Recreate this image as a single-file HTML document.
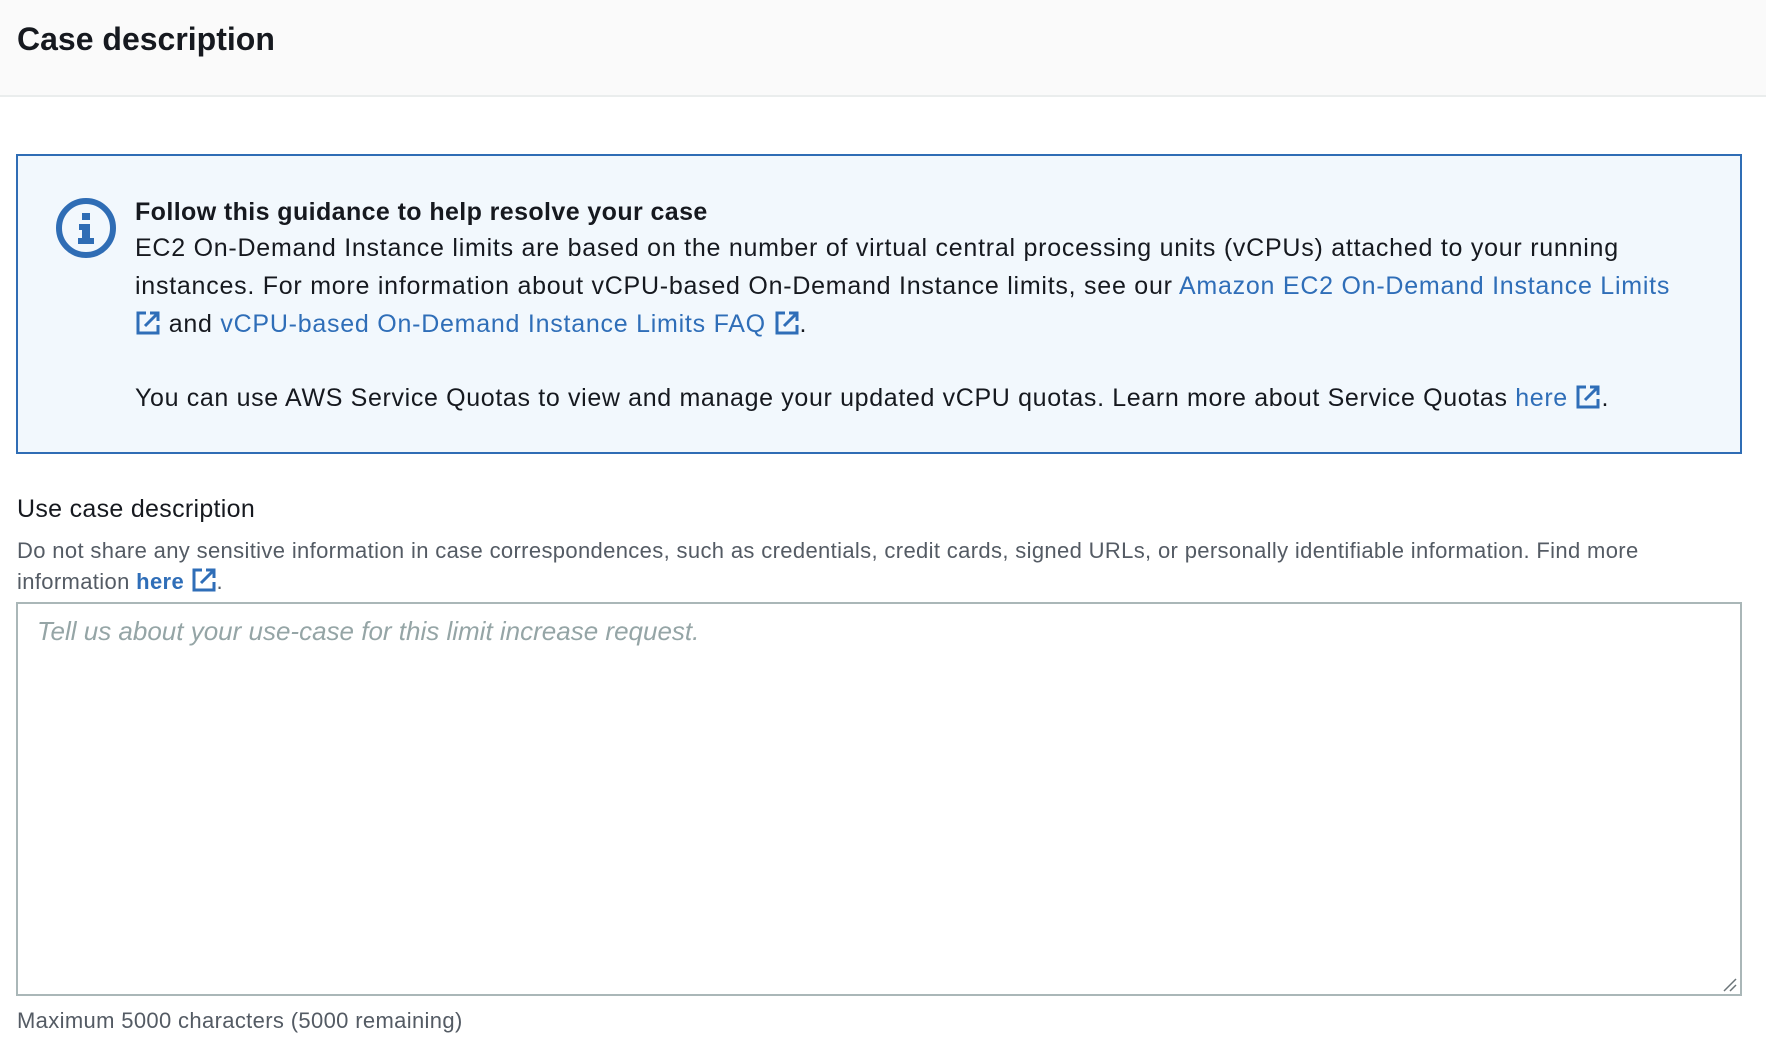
<!DOCTYPE html>
<html><head><meta charset="utf-8">
<style>
*{margin:0;padding:0;box-sizing:border-box}
body{width:1766px;height:1052px;background:#fff;font-family:"Liberation Sans",sans-serif;color:#16191f;position:relative;overflow:hidden}
.hdr{position:absolute;left:0;top:0;width:1766px;height:97px;background:#fafafa;border-bottom:2px solid #eaeded}
.hdr h1{position:absolute;left:17px;top:21px;font-size:32px;font-weight:700;letter-spacing:0px}
.box{position:absolute;left:16px;top:154px;width:1726px;height:300px;background:#f2f8fd;border:2px solid #2f6db5}
.ic{position:absolute;left:55px;top:197px}
.t{position:absolute;left:135px;font-size:25px;letter-spacing:0.75px;white-space:nowrap;line-height:30px}
a{color:#2f6eb8;text-decoration:none}
.ex{display:inline-block;vertical-align:-4px;width:26px;height:26px}
.lbl{position:absolute;left:17px;top:495px;font-size:25px;letter-spacing:0.3px}
.hint{position:absolute;left:17px;font-size:22px;letter-spacing:0.35px;color:#545b64;white-space:nowrap}
.ta{position:absolute;left:16px;top:602px;width:1726px;height:394px;border:2px solid #aab7b8;background:#fff}
.ph{position:absolute;left:37px;top:616px;font-size:26px;font-style:italic;color:#95a5a6}
</style></head><body>
<div class="hdr"><h1>Case description</h1></div>
<div class="box"></div>
<svg class="ic" width="62" height="62" viewBox="0 0 62 62"><circle cx="31" cy="31" r="27" fill="none" stroke="#2f6db5" stroke-width="6"/><rect x="27" y="16" width="8" height="7" fill="#2f6db5"/><path d="M24 27h11v14h4v6H23v-6h4v-8h-3z" fill="#2f6db5"/></svg>
<div class="t" style="top:197px;font-weight:700;letter-spacing:0.4px">Follow this guidance to help resolve your case</div>
<div class="t" style="top:233px">EC2 On-Demand Instance limits are based on the number of virtual central processing units (vCPUs) attached to your running</div>
<div class="t" style="top:271px">instances. For more information about vCPU-based On-Demand Instance limits, see our <a>Amazon EC2 On-Demand Instance Limits</a></div>
<div class="t" style="top:309px"><svg class="ex" viewBox="0 0 26 26"><path d="M11 3H3v20h20v-8" fill="none" stroke="#2f6eb8" stroke-width="3"/><path d="M10 16L22 4M15 3h8v8" fill="none" stroke="#2f6eb8" stroke-width="3"/></svg> and <a>vCPU-based On-Demand Instance Limits FAQ <svg class="ex" viewBox="0 0 26 26"><path d="M11 3H3v20h20v-8" fill="none" stroke="#2f6eb8" stroke-width="3"/><path d="M10 16L22 4M15 3h8v8" fill="none" stroke="#2f6eb8" stroke-width="3"/></svg></a>.</div>
<div class="t" style="top:383px;letter-spacing:0.65px">You can use AWS Service Quotas to view and manage your updated vCPU quotas. Learn more about Service Quotas <a>here <svg class="ex" viewBox="0 0 26 26"><path d="M11 3H3v20h20v-8" fill="none" stroke="#2f6eb8" stroke-width="3"/><path d="M10 16L22 4M15 3h8v8" fill="none" stroke="#2f6eb8" stroke-width="3"/></svg></a>.</div>
<div class="lbl">Use case description</div>
<div class="hint" style="top:538px">Do not share any sensitive information in case correspondences, such as credentials, credit cards, signed URLs, or personally identifiable information. Find more</div>
<div class="hint" style="top:567px">information <a style="font-weight:700">here <svg class="ex" viewBox="0 0 26 26"><path d="M11 3H3v20h20v-8" fill="none" stroke="#2f6eb8" stroke-width="3"/><path d="M10 16L22 4M15 3h8v8" fill="none" stroke="#2f6eb8" stroke-width="3"/></svg></a>.</div>
<div class="ta"></div>
<div class="ph">Tell us about your use-case for this limit increase request.</div>
<svg style="position:absolute;left:1722px;top:977px" width="16" height="16"><path d="M2 14L14 2M8 14L14 8" stroke="#6b7478" stroke-width="1.5"/></svg>
<div class="hint" style="top:1008px">Maximum 5000 characters (5000 remaining)</div>
</body></html>
